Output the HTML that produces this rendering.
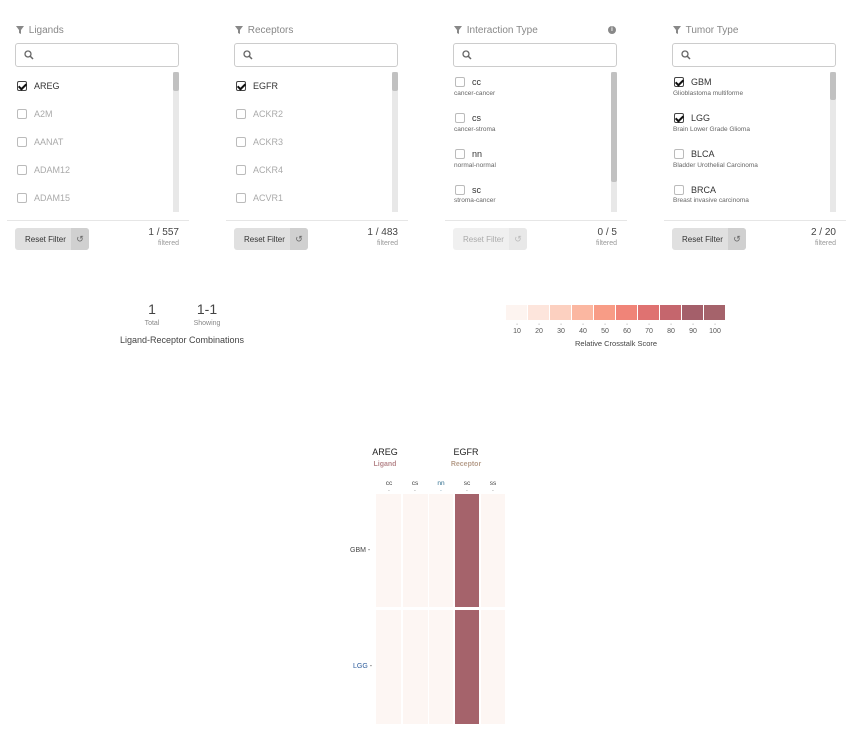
<!DOCTYPE html>
<html><head><style>
*{box-sizing:border-box;margin:0;padding:0}
body{width:867px;height:753px;background:#fff;font-family:"Liberation Sans",sans-serif;position:relative;overflow:hidden;color:#333}
.a{position:absolute}
.panel{position:absolute;top:0;width:182px;height:260px}
.title{position:absolute;left:9px;top:25px;font-size:10px;color:#888}
.title svg{vertical-align:-1px;margin-right:2px}
.search{position:absolute;left:8px;top:43px;width:164px;height:24px;border:1px solid #ccc;border-radius:3px}
.search svg{position:absolute;left:8px;top:6px}
.sb{position:absolute;left:166px;top:72px;width:6px;height:140px;background:#e8e8e8}
.sb i{position:absolute;left:0;top:0;width:6px;height:19px;background:#c1c1c1;border-radius:2px}
.sep{position:absolute;left:0;top:220px;width:182px;height:1px;background:#e6e6e6}
.btn{position:absolute;left:8px;top:228px;width:74px;height:22px;background:#e0e0e0;border-radius:3px;font-size:8px;color:#333}
.btn span{position:absolute;left:10px;top:7px}
.btn b{position:absolute;right:0;top:0;width:18px;height:22px;background:#d0d0d0;border-radius:0 3px 3px 0;font-weight:normal;font-size:9px;text-align:center;line-height:22px;color:#666}
.cnt{position:absolute;right:10px;top:227px;font-size:10px;text-align:right;color:#444}
.cnt small{display:block;font-size:7px;color:#999;margin-top:2px}
.it{position:absolute;left:10px;font-size:9px;color:#aaa}
.it.on{color:#333}
.cb{display:inline-block;width:10px;height:10px;border:1px solid #bbb;border-radius:2px;vertical-align:-2px;margin-right:7px;position:relative}
.on .cb{border-color:#444}
.on .cb:after{content:"";position:absolute;left:2px;top:0px;width:3px;height:6px;border:solid #111;border-width:0 2px 2px 0;transform:rotate(45deg)}
.sub{position:absolute;left:9px;font-size:6.5px;color:#666}
.col{position:absolute;top:494px;height:230px;background:#fdf6f3}
</style></head><body>

<!-- panel template -->
<div class="panel" style="left:7px">
 <div class="title"><svg width="8" height="8" viewBox="0 0 8 8"><path d="M0 0H8L5 4V8L3 7V4Z" fill="#888"/></svg> Ligands</div>
 <div class="search"><svg width="10" height="10" viewBox="0 0 10 10"><circle cx="4" cy="4" r="3" stroke="#666" stroke-width="1.3" fill="none"/><path d="M6 6L9 9" stroke="#666" stroke-width="1.5"/></svg></div>
 <div class="it on" style="top:81px"><span class="cb"></span>AREG</div>
 <div class="it" style="top:109px"><span class="cb"></span>A2M</div>
 <div class="it" style="top:137px"><span class="cb"></span>AANAT</div>
 <div class="it" style="top:165px"><span class="cb"></span>ADAM12</div>
 <div class="it" style="top:193px"><span class="cb"></span>ADAM15</div>
 <div class="sb"><i></i></div><div class="sep"></div>
 <div class="btn"><span>Reset Filter</span><b>↺</b></div>
 <div class="cnt">1 / 557<small>filtered</small></div>
</div>

<div class="panel" style="left:226px">
 <div class="title"><svg width="8" height="8" viewBox="0 0 8 8"><path d="M0 0H8L5 4V8L3 7V4Z" fill="#888"/></svg> Receptors</div>
 <div class="search"><svg width="10" height="10" viewBox="0 0 10 10"><circle cx="4" cy="4" r="3" stroke="#666" stroke-width="1.3" fill="none"/><path d="M6 6L9 9" stroke="#666" stroke-width="1.5"/></svg></div>
 <div class="it on" style="top:81px"><span class="cb"></span>EGFR</div>
 <div class="it" style="top:109px"><span class="cb"></span>ACKR2</div>
 <div class="it" style="top:137px"><span class="cb"></span>ACKR3</div>
 <div class="it" style="top:165px"><span class="cb"></span>ACKR4</div>
 <div class="it" style="top:193px"><span class="cb"></span>ACVR1</div>
 <div class="sb"><i></i></div><div class="sep"></div>
 <div class="btn"><span>Reset Filter</span><b>↺</b></div>
 <div class="cnt">1 / 483<small>filtered</small></div>
</div>

<div class="panel" style="left:445px">
 <div class="title"><svg width="8" height="8" viewBox="0 0 8 8"><path d="M0 0H8L5 4V8L3 7V4Z" fill="#888"/></svg> Interaction Type</div>
 <div class="a" style="left:163px;top:26px;width:8px;height:8px;border-radius:50%;background:#888;color:#fff;font-size:6px;text-align:center;line-height:8px;font-weight:bold">i</div>
 <div class="search"><svg width="10" height="10" viewBox="0 0 10 10"><circle cx="4" cy="4" r="3" stroke="#666" stroke-width="1.3" fill="none"/><path d="M6 6L9 9" stroke="#666" stroke-width="1.5"/></svg></div>
 <div class="it on" style="top:77px"><span class="cb" style="border-color:#bbb"></span>cc</div><div class="sub" style="top:90px">cancer-cancer</div>
 <div class="it on" style="top:113px"><span class="cb"></span>cs</div><div class="sub" style="top:126px">cancer-stroma</div>
 <div class="it on" style="top:149px"><span class="cb"></span>nn</div><div class="sub" style="top:162px">normal-normal</div>
 <div class="it on" style="top:185px"><span class="cb"></span>sc</div><div class="sub" style="top:197px">stroma-cancer</div>
 <div class="sb" style="height:140px"><i style="height:110px"></i></div><div class="sep"></div>
 <div class="btn" style="background:#f0f0f0;color:#aaa"><span>Reset Filter</span><b style="background:#e8e8e8;color:#bbb">↺</b></div>
 <div class="cnt">0 / 5<small>filtered</small></div>
</div>

<div class="panel" style="left:664px">
 <div class="title"><svg width="8" height="8" viewBox="0 0 8 8"><path d="M0 0H8L5 4V8L3 7V4Z" fill="#888"/></svg> Tumor Type</div>
 <div class="search"><svg width="10" height="10" viewBox="0 0 10 10"><circle cx="4" cy="4" r="3" stroke="#666" stroke-width="1.3" fill="none"/><path d="M6 6L9 9" stroke="#666" stroke-width="1.5"/></svg></div>
 <div class="it on" style="top:77px"><span class="cb"></span>GBM</div><div class="sub" style="top:90px">Glioblastoma multiforme</div>
 <div class="it on" style="top:113px"><span class="cb"></span>LGG</div><div class="sub" style="top:126px">Brain Lower Grade Glioma</div>
 <div class="it on" style="top:149px"><span class="cb" style="border-color:#bbb"></span>BLCA</div><div class="sub" style="top:162px">Bladder Urothelial Carcinoma</div>
 <div class="it on" style="top:185px"><span class="cb" style="border-color:#bbb"></span>BRCA</div><div class="sub" style="top:197px">Breast invasive carcinoma</div>
 <div class="sb"><i style="height:28px"></i></div><div class="sep"></div>
 <div class="btn"><span>Reset Filter</span><b>↺</b></div>
 <div class="cnt">2 / 20<small>filtered</small></div>
</div>
<style>.panel:nth-of-type(3) .it.on .cb:after,.it.on .cb[style]:after{display:none}
.panel:nth-of-type(3) .it.on .cb{border-color:#bbb}</style>

<!-- stats -->
<div class="a" style="left:140px;top:301px;width:24px;text-align:center;font-size:14px;color:#444">1</div>
<div class="a" style="left:135px;top:320px;width:34px;text-align:center;font-size:7px;color:#888">Total</div>
<div class="a" style="left:190px;top:301px;width:34px;text-align:center;font-size:14px;color:#444">1-1</div>
<div class="a" style="left:188px;top:320px;width:38px;text-align:center;font-size:7px;color:#888">Showing</div>
<div class="a" style="left:112px;top:335px;width:140px;text-align:center;font-size:9px;color:#444">Ligand-Receptor Combinations</div>

<!-- legend -->
<div class="a" style="left:506px;top:305px;display:flex;gap:1px">
<div style="width:21px;height:15px;background:#fdf4f0"></div>
<div style="width:21px;height:15px;background:#fde5dc"></div>
<div style="width:21px;height:15px;background:#fcd0c0"></div>
<div style="width:21px;height:15px;background:#fbb7a1"></div>
<div style="width:21px;height:15px;background:#f89c86"></div>
<div style="width:21px;height:15px;background:#f08478"></div>
<div style="width:21px;height:15px;background:#df7271"></div>
<div style="width:21px;height:15px;background:#c5666d"></div>
<div style="width:21px;height:15px;background:#a45f6a"></div>
<div style="width:21px;height:15px;background:#a5636b"></div>
</div>
<div class="a" style="left:506px;top:321px;display:flex;font-size:7px;color:#555">
<span style="width:22px;text-align:center">·<br>10</span><span style="width:22px;text-align:center">·<br>20</span><span style="width:22px;text-align:center">·<br>30</span><span style="width:22px;text-align:center">·<br>40</span><span style="width:22px;text-align:center">·<br>50</span><span style="width:22px;text-align:center">·<br>60</span><span style="width:22px;text-align:center">·<br>70</span><span style="width:22px;text-align:center">·<br>80</span><span style="width:22px;text-align:center">·<br>90</span><span style="width:22px;text-align:center">·<br>100</span>
</div>
<div class="a" style="left:546px;top:339px;width:140px;text-align:center;font-size:7.5px;color:#444">Relative Crosstalk Score</div>

<!-- heatmap -->
<div class="a" style="left:365px;top:447px;width:40px;text-align:center;font-size:9px;color:#222">AREG</div>
<div class="a" style="left:365px;top:461px;width:40px;text-align:center;font-size:7px;color:#b88a8e;font-weight:bold">Ligand</div>
<div class="a" style="left:446px;top:447px;width:40px;text-align:center;font-size:9px;color:#222">EGFR</div>
<div class="a" style="left:446px;top:461px;width:40px;text-align:center;font-size:7px;color:#b8a08e;font-weight:bold">Receptor</div>
<div class="a" style="left:376px;top:480px;width:130px;display:flex;font-size:6.5px;color:#444">
<span style="width:26px;text-align:center">cc<br>·</span><span style="width:26px;text-align:center">cs<br>·</span><span style="width:26px;text-align:center;color:#2a6a8a">nn<br>·</span><span style="width:26px;text-align:center">sc<br>·</span><span style="width:26px;text-align:center">ss<br>·</span>
</div>
<div class="col" style="left:376px;width:25px"></div>
<div class="col" style="left:403px;width:25px"></div>
<div class="col" style="left:429px;width:24px"></div>
<div class="col" style="left:455px;width:24px;background:#a5636b"></div>
<div class="col" style="left:481px;width:24px"></div>
<div class="a" style="left:376px;top:607px;width:130px;height:3px;background:#fff"></div>
<div class="a" style="left:350px;top:547px;font-size:7px;color:#444">GBM -</div>
<div class="a" style="left:353px;top:663px;font-size:7px;color:#2a5a9a">LGG <span style="color:#444">-</span></div>
</body></html>
